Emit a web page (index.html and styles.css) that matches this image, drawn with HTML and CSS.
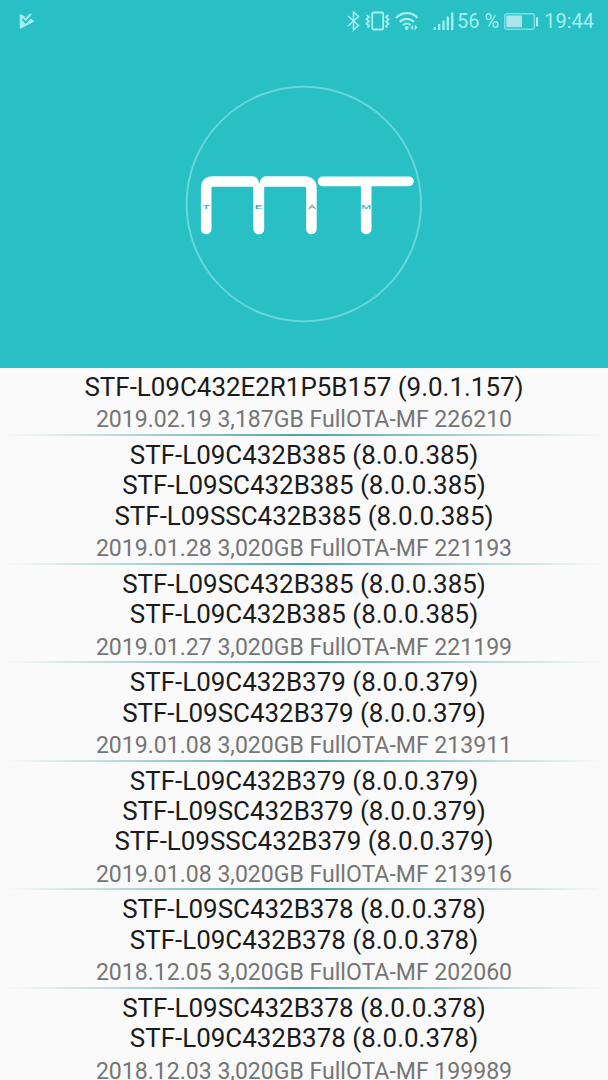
FILE: index.html
```html
<!DOCTYPE html>
<html lang="en">
<head>
<meta charset="UTF-8">
<meta name="viewport" content="width=device-width, initial-scale=1.0">
<title>MT Team</title>
<link rel="stylesheet" href="styles.css">
</head>
<body>

<header class="header">
    <div class="status">
        <svg class="play" width="16" height="17" viewBox="0 0 16 17">
            <path d="M1.2 1.5 L5.5 3.6 L4 5 L7 8.6 L11 5.8 L15 8.2 L1.2 15.5 Z" fill="#a5eff0" stroke="#a5eff0" stroke-width="0.8" stroke-linejoin="round"/>
            <path d="M3.8 5.6 L6.8 8.6 L12 2.5" fill="none" stroke="#28bfc5" stroke-width="3.2"/>
            <path d="M4.4 4.4 L6.8 6.6 L11.8 1" fill="none" stroke="#a5eff0" stroke-width="1.9"/>
        </svg>
        <svg class="signals" width="108" height="22" viewBox="0 0 108 22" fill="none" stroke="#a5eff0">
            <!-- bluetooth -->
            <path d="M1 6 L11.5 15.5 L6.5 20 V2 L11.5 6.5 L1 16" stroke-width="1.6"/>
            <!-- vibrate -->
            <rect x="25.2" y="2.5" width="11" height="17" rx="1.2" stroke-width="1.8"/>
            <path d="M19.5 5 L22 7 L19.5 9.3 L22 11.5 L19.5 13.8 L22 16 L20.5 17.5 M41.5 5 L39 7 L41.5 9.3 L39 11.5 L41.5 13.8 L39 16 L40.5 17.5" stroke-width="1.8"/>
            <!-- wifi -->
            <path d="M49 8 C55 1.5 65 1.5 70.5 8 M52.7 12 C56.5 7.7 63.1 7.7 67 12 M56.2 15.2 C58.3 12.9 61.3 12.9 63.5 15.2" stroke-width="2.2"/>
            <circle cx="59.8" cy="18" r="1.9" fill="#a5eff0" stroke="none"/>
            <path d="M66.2 14.8 V20.2 L63.5 17.5 Z M67.8 14.8 V20.2 L70.5 17.5 Z" fill="#a5eff0" stroke="none"/>
            <!-- mobile signal -->
            <path d="M87.8 17 V20 M92.2 14 V20 M96.5 10.5 V20 M100.8 6.5 V20 M105.2 2.5 V20" stroke-width="2.3"/>
        </svg>
        <span class="percent">56 %</span>
        <svg class="battery" width="35" height="17" viewBox="0 0 35 17">
            <rect x="0.8" y="0.8" width="29.5" height="15.4" rx="2" fill="none" stroke="#7cdfe2" stroke-width="1.5"/>
            <rect x="2.3" y="2.5" width="15.7" height="11.7" fill="#a9e8ea"/>
            <rect x="32" y="4.3" width="2.1" height="9" fill="#a5eff0"/>
        </svg>
        <span class="time">19:44</span>
    </div>

    <svg class="logo" width="240" height="240" viewBox="184 84 240 240">
        <circle cx="303.8" cy="204" r="117.2" fill="none" stroke="#65d7dc" stroke-width="2"/>
        <g fill="none" stroke="#fff" stroke-width="10.6" stroke-linecap="round">
            <path d="M206.2 229 V188 Q206.2 181.5 212.7 181.5 H252 Q258.8 181.5 258.8 188 V229"/>
            <path d="M258.8 229 V188 Q258.8 181.5 265.5 181.5 H304.5 Q311.4 181.5 311.4 188 V229"/>
            <path d="M366.2 183 V229"/>
            <path d="M322.5 181.4 H409" stroke-width="9.6"/>
        </g>
        <!-- notch between the two arches of the M -->
        <path d="M252.5 175.4 Q258.3 177 259.2 184 Q260.2 177 266 175.4 Z" fill="#28bfc5"/>
        <g class="team">
            <text x="206.2" y="209" textLength="8" lengthAdjust="spacingAndGlyphs">T</text>
            <text x="258.6" y="209" textLength="8" lengthAdjust="spacingAndGlyphs">E</text>
            <text x="311.9" y="209" textLength="8" lengthAdjust="spacingAndGlyphs">A</text>
            <text x="366.3" y="209" textLength="10" lengthAdjust="spacingAndGlyphs">M</text>
        </g>
    </svg>
</header>

<main class="list">
    <div class="item">
        <p class="name">STF-L09C432E2R1P5B157 (9.0.1.157)</p>
        <p class="info">2019.02.19 3,187GB FullOTA-MF 226210</p>
    </div>
    <div class="item">
        <p class="name">STF-L09C432B385 (8.0.0.385)<br>STF-L09SC432B385 (8.0.0.385)<br>STF-L09SSC432B385 (8.0.0.385)</p>
        <p class="info">2019.01.28 3,020GB FullOTA-MF 221193</p>
    </div>
    <div class="item">
        <p class="name">STF-L09SC432B385 (8.0.0.385)<br>STF-L09C432B385 (8.0.0.385)</p>
        <p class="info">2019.01.27 3,020GB FullOTA-MF 221199</p>
    </div>
    <div class="item">
        <p class="name">STF-L09C432B379 (8.0.0.379)<br>STF-L09SC432B379 (8.0.0.379)</p>
        <p class="info">2019.01.08 3,020GB FullOTA-MF 213911</p>
    </div>
    <div class="item">
        <p class="name">STF-L09C432B379 (8.0.0.379)<br>STF-L09SC432B379 (8.0.0.379)<br>STF-L09SSC432B379 (8.0.0.379)</p>
        <p class="info">2019.01.08 3,020GB FullOTA-MF 213916</p>
    </div>
    <div class="item">
        <p class="name">STF-L09SC432B378 (8.0.0.378)<br>STF-L09C432B378 (8.0.0.378)</p>
        <p class="info">2018.12.05 3,020GB FullOTA-MF 202060</p>
    </div>
    <div class="item">
        <p class="name">STF-L09SC432B378 (8.0.0.378)<br>STF-L09C432B378 (8.0.0.378)</p>
        <p class="info">2018.12.03 3,020GB FullOTA-MF 199989</p>
    </div>
</main>

</body>
</html>
```
FILE: styles.css
```css
* {
    box-sizing: border-box;
}
body {
    margin: 0;
    height: 1080px;
    overflow: hidden;
    display: flex;
    flex-direction: column;
    font-family: Roboto, sans-serif;
    background-color: #fafafa;
}
.header {
    height: 368px;
    flex-shrink: 0;
    background-color: #28bfc5;
}
.status {
    height: 42px;
    display: flex;
    align-items: center;
    padding: 0 14px 0 19px;
    font-size: 20px;
    color: #a5eff0;
    white-space: nowrap;
}
.signals {
    margin-left: auto;
    margin-right: 2px;
}
.battery {
    margin: 0 5px 0 5px;
}
.logo {
    display: block;
    margin: 42px 0 0 184px;
}
.team text {
    font-size: 6px;
    fill: #28a3a8;
    text-anchor: middle;
}
.list {
    flex: 1;
    overflow: hidden;
    text-align: center;
}
.item {
    padding: 4px 0 2px;
    background: linear-gradient(to right, rgba(75, 165, 160, 0) 1%, #4ba5a0 50%, rgba(75, 165, 160, 0) 99%) bottom / 100% 2px no-repeat;
}
.name {
    margin: 0;
    font-size: 25.95px;
    line-height: 30.4px;
    color: #1b1b1b;
}
.info {
    margin: 5px 0 0;
    font-size: 23.05px;
    line-height: 26.6px;
    color: #757575;
}
```
